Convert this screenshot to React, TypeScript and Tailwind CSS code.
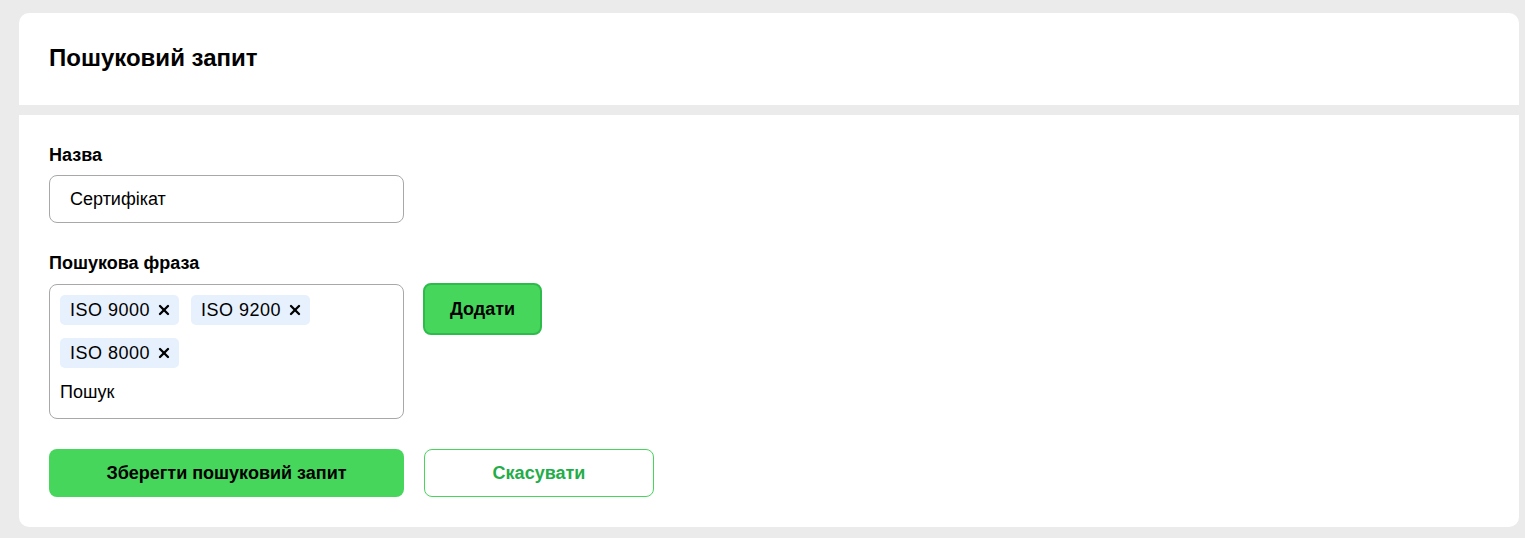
import { X } from "lucide-react";

export default function App() {
  const tags = ["ISO 9000", "ISO 9200", "ISO 8000"];

  return (
    <div className="min-h-[538px] bg-[#ebebeb] pl-[19px] pr-[6px] pt-[13px] pb-[10px] font-['Liberation_Sans',Arial,sans-serif] text-black">
      {/* Header card */}
      <div className="bg-white rounded-t-[10px] h-[92px] flex items-center px-[30px] pb-[2px]">
        <h1 className="text-[24px] font-bold">Пошуковий запит</h1>
      </div>

      {/* Form card */}
      <div className="mt-[10px] bg-white rounded-b-[10px] px-[30px] pt-[30px] pb-[30px]">
        <label className="block text-[18px] font-bold leading-5 mb-[10px]">Назва</label>
        <div className="w-[355px] h-[48px] rounded-[8px] border border-[#a8a8a8] flex items-center px-[20px] text-[18px]">
          Сертифікат
        </div>

        <label className="block text-[18px] font-bold leading-5 mt-[30px] mb-[11px]">Пошукова фраза</label>
        <div className="flex items-start gap-[19px]">
          <div className="w-[355px] h-[135px] rounded-[8px] border border-[#a8a8a8] px-[10px] pt-[10px]">
            <div className="flex flex-wrap gap-x-[12px] gap-y-[13px]">
              {tags.map((tag) => (
                <span
                  key={tag}
                  className="h-[30px] flex items-center gap-[6px] rounded-[5px] bg-[#e7f0fd] pl-[10px] pr-[7px] text-[18px] tracking-[0.5px]"
                >
                  {tag}
                  <X className="w-4 h-4" strokeWidth={3.5} />
                </span>
              ))}
            </div>
            <div className="mt-[14px] text-[18px] leading-[21px]">Пошук</div>
          </div>
          <button className="w-[119px] h-[52px] -mt-[1px] rounded-[8px] border-2 border-[#2fbb4b] bg-[#46d65c] text-[18px] font-bold">
            Додати
          </button>
        </div>

        <div className="flex gap-[20px] mt-[30px]">
          <button className="w-[355px] h-[48px] rounded-[8px] bg-[#46d65c] text-[18px] font-bold">
            Зберегти пошуковий запит
          </button>
          <button className="w-[230px] h-[48px] rounded-[8px] border border-[#46d65c] bg-white text-[18px] font-bold text-[#23ad48]">
            Скасувати
          </button>
        </div>
      </div>
    </div>
  );
}
